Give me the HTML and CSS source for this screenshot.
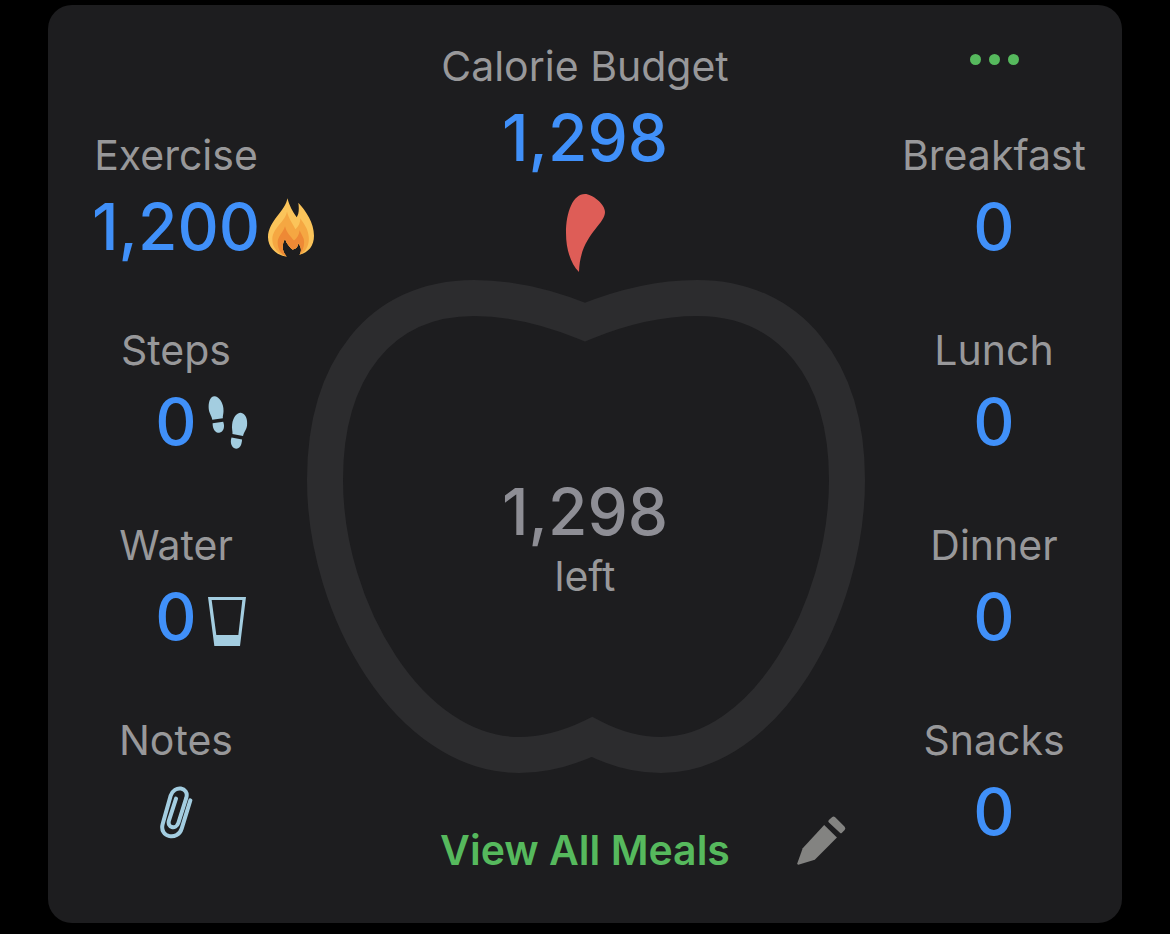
FILE: index.html
```html
<!DOCTYPE html>
<html lang="en">
<head>
<meta charset="utf-8">
<meta name="viewport" content="width=device-width, initial-scale=1">
<title>Calorie Budget</title>
<link rel="stylesheet" href="styles.css">
</head>
<body>
<main class="card">
  <section class="side side-left">
    <div class="stat">
      <h2 class="label">Exercise</h2>
      <div class="value-row">
        <span class="value">1,200</span>
        <svg class="icon icon-flame" width="46" height="59" viewBox="558 236 138 176" aria-hidden="true">
          <path fill="#fbc45a" d="M616 236C612 272 558 305 558 353C558 386 586 408 614 411C598 394 600 374 609 358C614 374 624 384 631 390C643 388 648 381 649 371C659 384 659 396 652 406C680 399 696 379 696 349C696 310 672 275 649 250C652 270 650 286 644 293C632 277 622 257 616 236Z"/>
          <path fill="#f5a742" d="M615 276C611 306 571 325 571 360C571 386 590 405 614 411C598 394 600 374 609 358C614 374 624 384 631 390C643 388 648 381 649 371C659 384 659 396 652 406C672 397 683 376 680 350C678 326 664 311 655 296C655 310 650 320 640 329C632 312 620 298 615 276Z"/>
          <path fill="#ee8935" d="M609 320C604 339 586 350 587 371C588 391 599 405 614 411C598 394 600 374 609 358C614 374 624 384 631 390C643 388 648 381 649 371C659 384 659 396 652 406C664 392 669 375 665 358C661 347 656 341 653 332C651 347 644 357 636 363C625 349 614 340 609 320Z"/>
        </svg>
      </div>
    </div>
    <div class="stat">
      <h2 class="label">Steps</h2>
      <div class="value-row">
        <span class="value">0</span>
        <svg class="icon" width="40" height="53" viewBox="203 43 119 160" fill="#a3cde0" aria-hidden="true">
          <path d="M221 44C236 44 250 66 249 88C249 97 246 104 247 110L215 115C214 103 204 95 204 77C204 57 211 44 221 44Z"/>
          <path d="M216 125L248 121C254 137 249 152 236 154C223 154 216 142 216 125Z"/>
          <path d="M303 94C316 97 322 113 320 132C318 146 309 154 308 164L276 158C277 149 273 141 275 128C278 108 289 92 303 94Z"/>
          <path d="M273 168L305 174C304 191 298 202 287 202C273 200 268 184 273 168Z"/>
        </svg>
      </div>
    </div>
    <div class="stat">
      <h2 class="label">Water</h2>
      <div class="value-row">
        <span class="value">0</span>
        <svg class="icon icon-glass" width="38" height="49" viewBox="204 51 114 147" aria-hidden="true">
          <path fill="#a3cde0" fill-rule="evenodd" d="M204 51H318L300 198H223ZM215 60L229 165H295L307 60Z"/>
        </svg>
      </div>
    </div>
    <div class="stat">
      <h2 class="label">Notes</h2>
      <div class="value-row">
        <svg class="icon-clip" width="33" height="53" viewBox="148 226 99 159" fill="none" stroke="#a3cde0" stroke-width="12" stroke-linecap="round" role="img" aria-label="Attach note">
          <path d="M239 269L213 354C202 391 145 381 156 340L180 255C190 222 236 229 227 261L203 337C196 358 168 351 175 329L196 264"/>
        </svg>
      </div>
    </div>
  </section>

  <section class="center">
    <div class="stat">
      <h1 class="label">Calorie Budget</h1>
      <div class="value-row"><span class="value">1,298</span></div>
    </div>
    <div class="apple">
      <svg class="apple-shape" viewBox="304 193 562 582" aria-hidden="true">
        <path fill="#de5d57" d="M585 194C592 194 605 204 605 212C605 225 580 235 579 272C571 264 566 250 566 233C566 212 573 194 585 194Z"/>
        <path fill="none" stroke="#2c2c2e" stroke-width="36" d="M585 322C548 307 510 298 474 298C380 298 325 370 325 480C325 610 410 755 519 755C545 755 567 749 592 737C615 749 638 755 661 755C765 755 847 610 847 480C847 370 790 298 697 298C660 298 622 307 585 322Z"/>
      </svg>
      <div class="remaining">
        <span class="value value-muted">1,298</span>
        <span class="label">left</span>
      </div>
    </div>
    <div class="actions">
      <button class="view-all" type="button">View All Meals</button>
      <button class="edit" type="button" aria-label="Edit">
        <svg width="49" height="49" viewBox="51 50 146 146" fill="#838381" aria-hidden="true">
          <path d="M52 191L68 146L132 77L170 114L104 180L55 195Q51 195 52 191Z"/>
          <path d="M146 62L156 53Q160 50 164 53L193 82Q197 87 193 92L185 100Q182 103 179 100L146 69Q142 66 146 62Z"/>
        </svg>
      </button>
    </div>
  </section>

  <section class="side side-right">
    <button class="more" type="button" aria-label="More options">
      <span class="dot"></span><span class="dot"></span><span class="dot"></span>
    </button>
    <div class="stat"><h2 class="label">Breakfast</h2><div class="value-row"><span class="value">0</span></div></div>
    <div class="stat"><h2 class="label">Lunch</h2><div class="value-row"><span class="value">0</span></div></div>
    <div class="stat"><h2 class="label">Dinner</h2><div class="value-row"><span class="value">0</span></div></div>
    <div class="stat"><h2 class="label">Snacks</h2><div class="value-row"><span class="value">0</span></div></div>
  </section>
</main>
</body>
</html>
```
FILE: styles.css
```css
* {
  box-sizing: border-box;
}

body {
  margin: 0;
  padding: 5px 48px 11px;
  background: #000;
  font-family: Inter, "Liberation Sans", sans-serif;
}

button {
  padding: 0;
  border: 0;
  background: none;
  font: inherit;
  cursor: pointer;
}

svg {
  display: block;
}

.card {
  display: grid;
  grid-template-columns: 256px minmax(0, 1fr) 256px;
  padding-bottom: 48px;
  border-radius: 24px;
  background: #1d1d1f;
}

.side {
  display: flex;
  flex-direction: column;
  gap: 63px;
}

.side-left {
  padding-top: 125px;
}

.side-right {
  padding-top: 32px;
}

.stat {
  display: flex;
  flex-direction: column;
  gap: 12px;
}

.label {
  margin: 0;
  color: #98989a;
  font-size: 41px;
  font-weight: 400;
  line-height: 50px;
  text-align: center;
}

.value-row {
  display: grid;
  grid-template-columns: minmax(0, 1fr) auto minmax(0, 1fr);
  align-items: center;
  height: 70px;
}

.value {
  grid-column: 2;
  color: #4090f9;
  font-size: 64px;
  font-weight: 500;
  line-height: 70px;
}

.value-muted {
  color: #8e8e95;
}

.icon {
  grid-column: 3;
  margin-left: 11px;
}

.icon-flame {
  margin-left: 8px;
}

.icon-glass {
  margin-top: 8px;
}

.icon-clip {
  grid-column: 2;
}

.center {
  padding-top: 36px;
}

.apple {
  display: grid;
  margin-top: 20px;
}

.apple-shape {
  grid-area: 1 / 1;
  width: 100%;
}

.remaining {
  grid-area: 1 / 1;
  display: flex;
  flex-direction: column;
  align-items: center;
  align-self: center;
  gap: 4px;
  padding-top: 110px;
}

.actions {
  display: grid;
  grid-template-columns: 1fr auto 1fr;
  margin-top: 41px;
}

.view-all {
  grid-column: 2;
  align-self: end;
  margin-top: 9px;
  color: #56b95d;
  font-size: 41px;
  font-weight: 600;
  line-height: 50px;
}

.edit {
  justify-self: start;
  align-self: start;
  margin-left: 67px;
}

.more {
  display: flex;
  align-items: center;
  justify-content: center;
  align-self: center;
  gap: 8px;
  width: 80px;
  height: 44px;
  margin-bottom: -14px;
}

.dot {
  width: 11px;
  height: 11px;
  border-radius: 50%;
  background: #56b95d;
}
```
